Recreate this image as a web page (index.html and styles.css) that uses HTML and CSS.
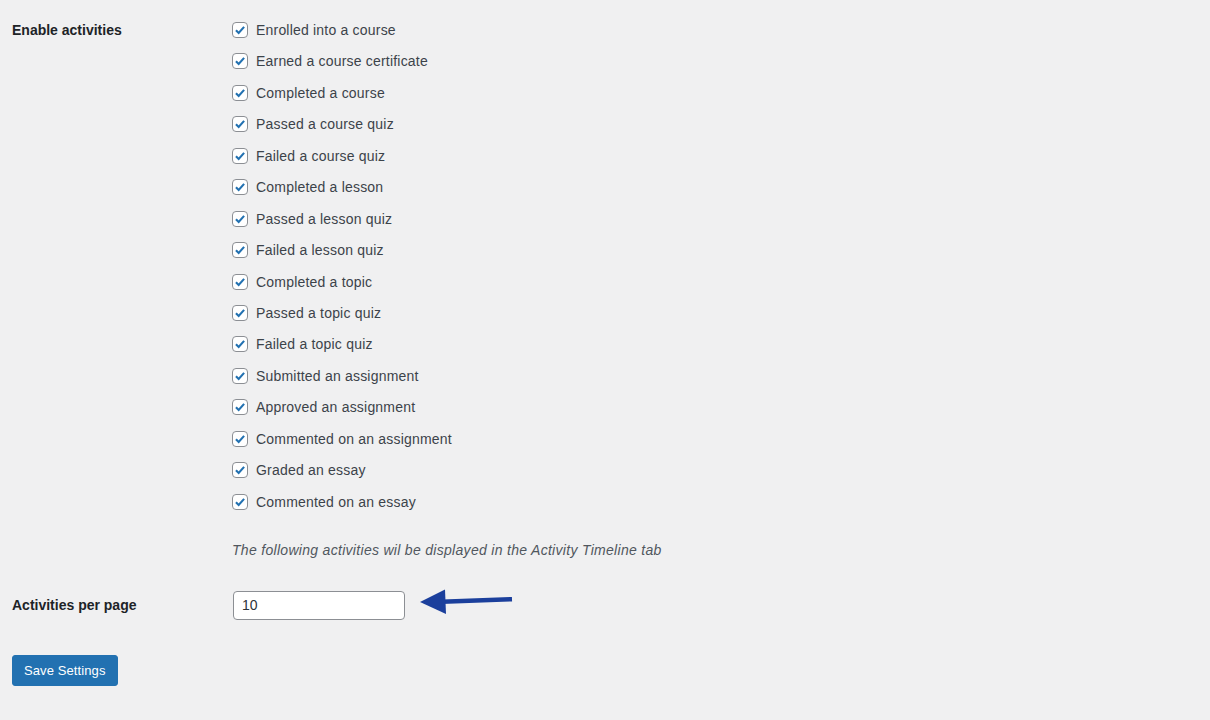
FILE: index.html
```html
<!DOCTYPE html>
<html lang="en">
<head>
    <meta charset="UTF-8">
    <title>Activity Settings</title>
    <link rel="stylesheet" href="styles.css">
</head>
<body>
    <form class="settings">
        <div class="row">
            <div class="row-label">Enable activities</div>
            <div class="row-field">
                <ul class="checks">
                    <li><span class="box"><svg viewBox="0 0 16 16"><path d="M3.4 8.2l3.1 3.2 6.2-7"/></svg></span>Enrolled into a course</li>
                    <li><span class="box"><svg viewBox="0 0 16 16"><path d="M3.4 8.2l3.1 3.2 6.2-7"/></svg></span>Earned a course certificate</li>
                    <li><span class="box"><svg viewBox="0 0 16 16"><path d="M3.4 8.2l3.1 3.2 6.2-7"/></svg></span>Completed a course</li>
                    <li><span class="box"><svg viewBox="0 0 16 16"><path d="M3.4 8.2l3.1 3.2 6.2-7"/></svg></span>Passed a course quiz</li>
                    <li><span class="box"><svg viewBox="0 0 16 16"><path d="M3.4 8.2l3.1 3.2 6.2-7"/></svg></span>Failed a course quiz</li>
                    <li><span class="box"><svg viewBox="0 0 16 16"><path d="M3.4 8.2l3.1 3.2 6.2-7"/></svg></span>Completed a lesson</li>
                    <li><span class="box"><svg viewBox="0 0 16 16"><path d="M3.4 8.2l3.1 3.2 6.2-7"/></svg></span>Passed a lesson quiz</li>
                    <li><span class="box"><svg viewBox="0 0 16 16"><path d="M3.4 8.2l3.1 3.2 6.2-7"/></svg></span>Failed a lesson quiz</li>
                    <li><span class="box"><svg viewBox="0 0 16 16"><path d="M3.4 8.2l3.1 3.2 6.2-7"/></svg></span>Completed a topic</li>
                    <li><span class="box"><svg viewBox="0 0 16 16"><path d="M3.4 8.2l3.1 3.2 6.2-7"/></svg></span>Passed a topic quiz</li>
                    <li><span class="box"><svg viewBox="0 0 16 16"><path d="M3.4 8.2l3.1 3.2 6.2-7"/></svg></span>Failed a topic quiz</li>
                    <li><span class="box"><svg viewBox="0 0 16 16"><path d="M3.4 8.2l3.1 3.2 6.2-7"/></svg></span>Submitted an assignment</li>
                    <li><span class="box"><svg viewBox="0 0 16 16"><path d="M3.4 8.2l3.1 3.2 6.2-7"/></svg></span>Approved an assignment</li>
                    <li><span class="box"><svg viewBox="0 0 16 16"><path d="M3.4 8.2l3.1 3.2 6.2-7"/></svg></span>Commented on an assignment</li>
                    <li><span class="box"><svg viewBox="0 0 16 16"><path d="M3.4 8.2l3.1 3.2 6.2-7"/></svg></span>Graded an essay</li>
                    <li><span class="box"><svg viewBox="0 0 16 16"><path d="M3.4 8.2l3.1 3.2 6.2-7"/></svg></span>Commented on an essay</li>
                </ul>
                <p class="description">The following activities wil be displayed in the Activity Timeline tab</p>
            </div>
        </div>

        <div class="row row-per-page">
            <div class="row-label">Activities per page</div>
            <div class="row-field field-inline">
                <input type="text" class="small-input" value="10">
                <svg class="arrow" viewBox="0 0 96 28" width="96" height="28">
                    <path class="arrow-shaft" d="M22 14.8L92 12.2"/>
                    <path class="arrow-head" d="M0 15L25 2.5L26 27Z"/>
                </svg>
            </div>
        </div>

        <button type="button" class="button-primary">Save Settings</button>
    </form>
</body>
</html>
```

FILE: styles.css
```css
body {
    margin: 0;
    background: #f0f0f1;
    color: #3c434a;
    font-family: "Liberation Sans", Arial, sans-serif;
    font-size: 14px;
}
.settings {
    padding: 22px 12px 0 12px;
}
.row {
    display: flex;
}
.row-label {
    width: 220px;
    flex-shrink: 0;
    font-weight: bold;
    color: #1d2327;
    line-height: 16px;
}
.checks {
    list-style: none;
    margin: 0;
    padding: 0;
}
.checks li {
    display: flex;
    align-items: center;
    height: 16px;
    margin-bottom: 15.45px;
    line-height: 16px;
    letter-spacing: 0.2px;
    white-space: nowrap;
}
.checks li:last-child {
    margin-bottom: 0;
}
.box {
    box-sizing: border-box;
    width: 16px;
    height: 16px;
    margin-right: 8px;
    border: 1px solid #8c8f94;
    border-radius: 4px;
    background: #fff;
    display: flex;
    align-items: center;
    justify-content: center;
}
.box svg {
    width: 16px;
    height: 16px;
}
.box path {
    fill: none;
    stroke: #2271b1;
    stroke-width: 2.4;
}
.description {
    margin: 32px 0 0 0;
    font-style: italic;
    color: #50575e;
    line-height: 16px;
    letter-spacing: 0.3px;
}
.row-per-page {
    margin-top: 33px;
    align-items: center;
}
.field-inline {
    display: flex;
    align-items: center;
}
.small-input {
    box-sizing: border-box;
    width: 172px;
    height: 29px;
    margin-left: 1px;
    padding: 0 8px;
    border: 1px solid #8c8f94;
    border-radius: 4px;
    background: #fff;
    color: #2c3338;
    font-family: inherit;
    font-size: 14px;
}
.arrow {
    margin-left: 15px;
    margin-top: -8px;
}
.arrow-shaft {
    stroke: #1b3f9c;
    stroke-width: 4.5;
    fill: none;
}
.arrow-head {
    fill: #1b3f9c;
}
.button-primary {
    margin-top: 35px;
    height: 31px;
    padding: 0 11px;
    border: 1px solid #2271b1;
    border-radius: 3px;
    background: #2271b1;
    color: #fff;
    font-family: inherit;
    font-size: 13px;
    letter-spacing: 0.1px;
    cursor: pointer;
}
```
